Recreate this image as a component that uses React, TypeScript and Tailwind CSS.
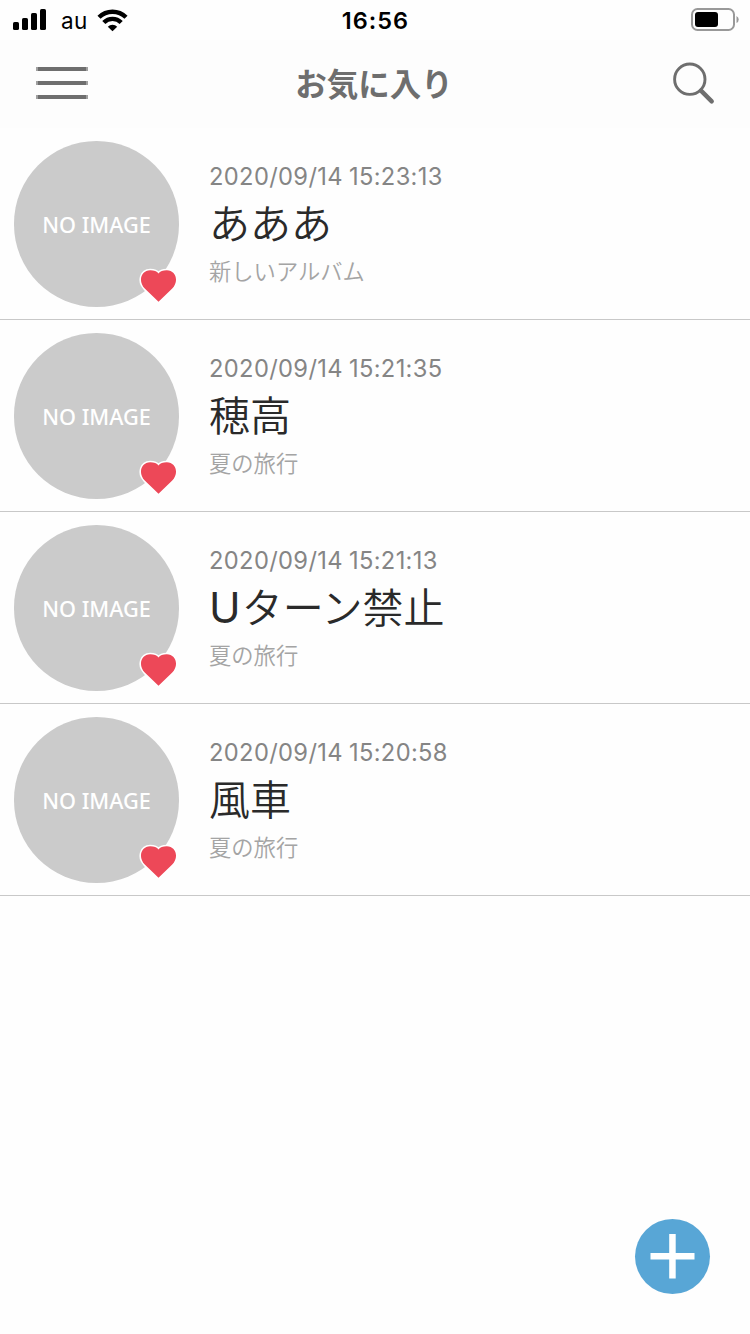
type Entry = { time: string; latin?: string; title: string; album: string };

const entries: Entry[] = [
  { time: "2020/09/14 15:23:13", title: "あああ", album: "新しいアルバム" },
  { time: "2020/09/14 15:21:35", title: "穂高", album: "夏の旅行" },
  { time: "2020/09/14 15:21:13", latin: "U", title: "ターン禁止", album: "夏の旅行" },
  { time: "2020/09/14 15:20:58", title: "風車", album: "夏の旅行" },
];

function StatusBar() {
  return (
    <div className="grid h-10 grid-cols-3 grid-rows-[40px] items-center pl-[13px] pr-[11px] text-black">
      <div className="flex h-10 items-center">
        <svg width="34" height="22" viewBox="0 0 34 22" aria-hidden="true">
          <rect x="0" y="13" width="6" height="8" rx="1.6" />
          <rect x="9" y="9" width="6" height="12" rx="1.6" />
          <rect x="18" y="4" width="6" height="17" rx="1.6" />
          <rect x="27" y="0" width="6" height="21" rx="1.6" />
        </svg>
        <span className="ml-[14px] w-9 pt-[2px] text-[22.5px] leading-none tracking-[0.3px]">au</span>
        <svg width="31" height="23" viewBox="0 0 31 23" aria-hidden="true">
          <g fill="none" stroke="#000" strokeWidth="4.4">
            <path d="M2 8.3 A19.2 19.2 0 0 1 29 8.3" />
            <path d="M6.8 13.5 A12.3 12.3 0 0 1 24.2 13.5" />
          </g>
          <path d="M15.5 22.3 L10.8 17.7 A6.8 6.8 0 0 1 20.2 17.7 Z" />
        </svg>
      </div>
      <div className="h-10 pr-[1px] text-center text-[23.5px] font-semibold leading-[41px] tracking-[1px]">16:56</div>
      <div className="flex justify-end">
        <svg width="48" height="24" viewBox="0 0 48 24" aria-hidden="true">
          <rect x="1" y="1" width="42" height="21" rx="5.5" fill="none" stroke="#999" strokeWidth="2" />
          <rect x="4" y="4" width="23" height="15" rx="3" />
          <path d="M45.5 8 Q47.7 9 47.7 11.5 T45.5 15 Z" fill="#999" />
        </svg>
      </div>
    </div>
  );
}

function NavBar() {
  return (
    <header className="grid h-[88px] grid-cols-[52px_1fr_43px] items-center bg-[#fdfdfd] pl-9 pr-[35px] text-[#6e6e6e]">
      <button aria-label="メニュー" className="flex w-[52px] flex-col gap-[10px] pb-[2px]">
        <span className="h-1 border-x-2 border-[#a0a0a0] bg-[#6e6e6e]" />
        <span className="h-1 border-x-2 border-[#a0a0a0] bg-[#6e6e6e]" />
        <span className="h-1 border-x-2 border-[#a0a0a0] bg-[#6e6e6e]" />
      </button>
      <h1 className="pb-[4px] pr-[12px] text-center font-['Noto_Sans_CJK_JP',sans-serif] text-[31.5px] font-bold leading-[44px]">
        お気に入り
      </h1>
      <button aria-label="検索" className="pb-[2px]">
        <svg width="43" height="44" viewBox="0 0 43 44" fill="none" stroke="currentColor" aria-hidden="true">
          <circle cx="17.8" cy="18.2" r="15.2" strokeWidth="2.9" />
          <path d="M29 29.6 L39.7 40.4" strokeWidth="4.4" strokeLinecap="round" />
        </svg>
      </button>
    </header>
  );
}

function Thumbnail() {
  return (
    <div className="relative ml-[14px] flex h-[166px] w-[165px] items-center justify-center rounded-full bg-[#cbcbcb]">
      <span className="pt-[2px] font-['Noto_Sans',sans-serif] text-[21.7px] font-medium leading-none text-white">
        NO IMAGE
      </span>
      <svg className="absolute left-[125px] top-[127px]" width="40" height="36" viewBox="0 0 40 36" aria-hidden="true">
        <path
          d="M19.5 33.8 L6 20.8 C-1.5 13.3 2.2 2.3 11.2 2.3 C15 2.3 18 3.4 19.5 5.6 C21 3.4 24 2.3 27.8 2.3 C36.8 2.3 40.5 13.3 33 20.8 Z"
          fill="#ed4858"
          stroke="#fff"
          strokeWidth="3"
          paintOrder="stroke"
        />
      </svg>
    </div>
  );
}

function EntryRow({ time, latin, title, album }: Entry) {
  return (
    <li className="flex h-48 items-start border-b border-[#c8c8c8] pt-[13px]">
      <Thumbnail />
      <div className="ml-[30px] flex flex-col pt-[21px]">
        <time className="text-[23.7px] leading-[30px] tracking-[0.35px] text-[#858585] [word-spacing:-1px]">{time}</time>
        <h2 className="text-[41px] font-[350] leading-[64px] text-[#2a2a2a]">
          {latin && <span className="mr-[1px] text-[42.5px] font-normal leading-none">{latin}</span>}
          {title}
        </h2>
        <p className="text-[22.3px] font-[350] leading-[32px] text-[#a4a4a4]">{album}</p>
      </div>
    </li>
  );
}

export default function App() {
  return (
    <div className="relative h-[1334px] w-[750px] overflow-hidden bg-[#fefefe] font-['Inter','Noto_Sans_CJK_JP',sans-serif]">
      <StatusBar />
      <NavBar />
      <ul>
        {entries.map((entry) => (
          <EntryRow key={entry.time} {...entry} />
        ))}
      </ul>
      <button
        aria-label="追加"
        className="absolute bottom-10 right-10 flex size-[75px] items-center justify-center rounded-full bg-[#58a6d6]"
      >
        <svg width="45" height="45" viewBox="0 0 45 45" fill="#fff" aria-hidden="true">
          <rect x="0.5" y="19" width="44" height="6.5" />
          <rect x="19.2" y="0" width="6.5" height="44.5" />
        </svg>
      </button>
    </div>
  );
}
